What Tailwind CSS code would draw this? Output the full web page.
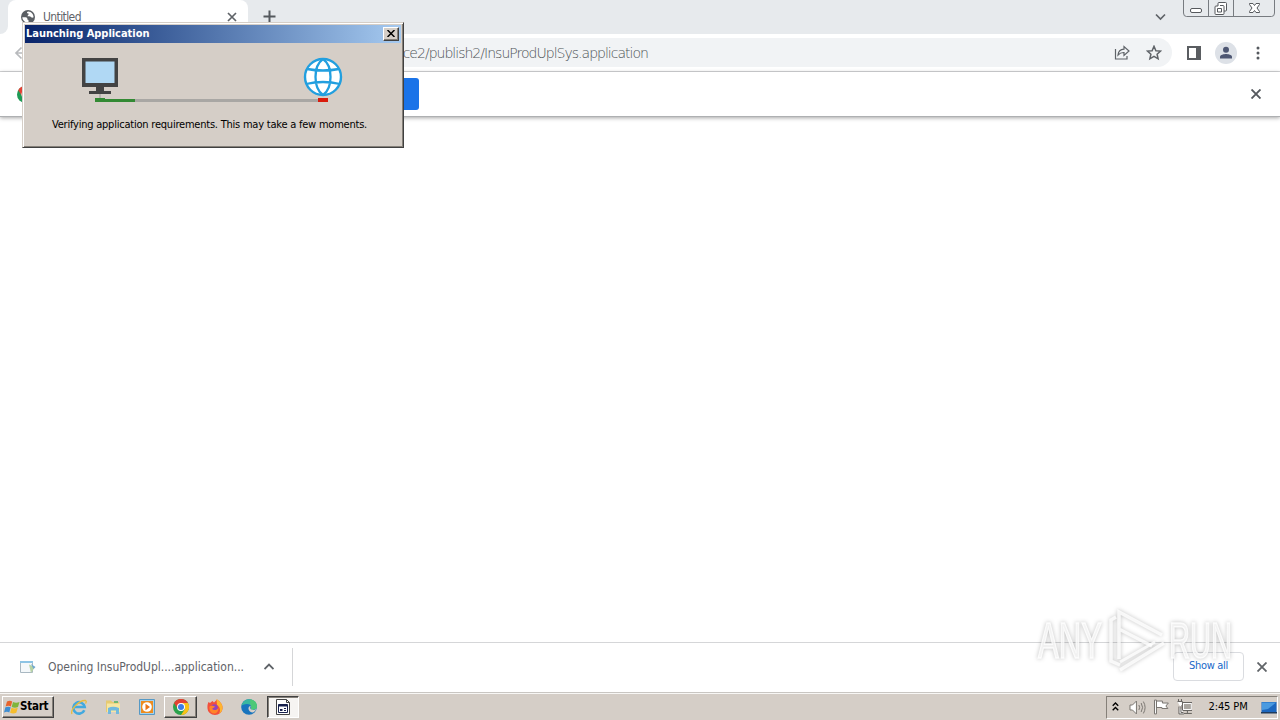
<!DOCTYPE html>
<html lang="en">
<head>
<meta charset="utf-8">
<title>Untitled</title>
<script src="https://cdn.jsdelivr.net/npm/@tailwindcss/browser@4"></script>
</head>
<body class="w-[1280px] h-[720px] overflow-hidden bg-white font-['DejaVu_Sans_Condensed','DejaVu_Sans',sans-serif] [font-stretch:condensed]">
<div class="relative flex h-[720px] w-[1280px] flex-col overflow-hidden">

  <!-- Tab strip -->
  <header class="flex h-[34px] shrink-0 items-start bg-[#e7eaed]">
    <div class="h-[34px] w-2 bg-white"><div class="h-full w-full rounded-br-lg bg-[#e7eaed]"></div></div>
    <div class="flex h-[34px] w-[240px] items-center rounded-t-lg bg-white pl-[13px] pr-[11px]">
      <svg class="size-[14px] shrink-0" viewBox="0 0 14 14"><circle cx="7" cy="7" r="7" fill="#5b5f64"/><path d="M1.3 7.2h3.2c1.8 0 2 1 1.8 2.2 1.2 0 1.4.7 1.2 2.8-3.4.6-6-1.800-6.200-5zM6 2c-.2 1.500.8 1.400 1.600 1.600.3 1.700-1.200 1.500-1 2.600 1.500.5 2.400-.2 3.400.9.9.9 1.500.6 2.600.1C12.500 4 10 1.500 7.500 1.400z" fill="#fff"/></svg>
      <span class="ml-2 text-[12px] leading-[34px] tracking-[-0.6px] text-[#5f6368]">Untitled</span>
      <svg class="ml-auto size-[10px]" viewBox="0 0 10 10" stroke="#5f6368" stroke-width="1.700"><path d="M1 1l8 8M9 1L1 9"/></svg>
    </div>
    <svg class="ml-[15px] mt-[10px] size-[13px]" viewBox="0 0 13 13" stroke="#55595e" stroke-width="2"><path d="M6.500.5v12M.5 6.500h12"/></svg>
    <svg class="ml-auto mr-[16px] mt-[13px] h-[8px] w-[11px]" viewBox="0 0 11 8" fill="none" stroke="#5f6368" stroke-width="1.700"><path d="M1 1.500l4.500 4.500L10 1.500"/></svg>
    <svg class="mr-1 h-[18px] w-[94px]" viewBox="0 0 94 18" fill="none" stroke="#777b80"><path d="M1.500 0v13q0 3.500 3 3.500h85q3 0 3-3.500V0M26.500 0v16M51.500 0v16"/><g fill="#fff" stroke="#56595d"><rect x="8.500" y="8.500" width="11" height="4" rx="1.500"/><path d="M36 3.500q0-1 1-1h6.500q1 0 1 1V10q0 1-1 1H42v2.500q0 1-1 1h-7q-1 0-1-1V7q0-1 1-1h2zM35.500 8.500h4v3.500h-4zM38 5.500h3q1 0 1 1V11" /><path d="M67.500 3.500h3.500l1.500 2 1.500-2h3.500v1L75 8l2.500 3.500v1H74l-1.500-2-1.500 2h-3.500v-1L70 8l-2.500-3.500z"/></g></svg>
  </header>

  <!-- Toolbar -->
  <div class="flex h-[38px] shrink-0 items-center border-b border-[#d5d6d8] bg-white">
    <svg class="ml-[14px] size-[14px]" viewBox="0 0 14 14" fill="none" stroke="#b8babd" stroke-width="1.700"><path d="M14 7H2M7.500 1.500L2 7l5.500 5.500"/></svg>
    <div class="ml-20 flex h-[29px] w-[1064px] items-center rounded-full bg-[#f1f3f5] pr-[10px]">
      <span class="w-[540px] text-right font-['DejaVu_Sans_Light','DejaVu_Sans',sans-serif] text-[14px] font-extralight leading-[28px] tracking-[-0.98px] text-[#4f5357]">ce2/publish2/InsuProdUplSys.application</span>
      <svg class="ml-auto size-[16px]" viewBox="0 0 16 16" fill="none" stroke="#5f6368" stroke-width="1.200"><path d="M1.500 4v10h11.500V11"/><path d="M4 10Q4.500 4.500 10 4.200V1.500l5 4.500-5 4.500V7.500Q6.500 7.300 4 10z"/></svg>
      <svg class="ml-4 size-[16px]" viewBox="0 0 16 16" fill="none" stroke="#5f6368" stroke-width="1.500"><path d="M8 1.300l1.900 4.400 4.700.4-3.500 3.100 1 4.600L8 11.300l-4.100 2.500 1-4.600-3.500-3.100 4.700-.4z"/></svg>
    </div>
    <svg class="ml-[15px] h-[14px] w-[14px]" viewBox="0 0 14 14"><path d="M0 0h14v14H0zM2 2v10h7V2z" fill="#5a5d61" fill-rule="evenodd"/></svg>
    <svg class="ml-[14px] size-[22px]" viewBox="0 0 22 22"><circle cx="11" cy="11" r="11" fill="#dde1e7"/><circle cx="11" cy="7.800" r="3" fill="#4e5773"/><path d="M5 16.500v-1.700c0-2 4-2.800 6-2.800s6 .8 6 2.800v1.700z" fill="#4e5773"/></svg>
    <svg class="ml-[19px] h-[14px] w-[4px]" viewBox="0 0 4 14" fill="#55595e"><circle cx="2" cy="2" r="1.500"/><circle cx="2" cy="7" r="1.500"/><circle cx="2" cy="12" r="1.500"/></svg>
  </div>

  <!-- Info bar -->
  <div class="relative flex h-[45px] shrink-0 items-center border-b border-[#aeb0b2] bg-white shadow-[0_1px_4px_rgba(0,0,0,0.35)]">
    <svg class="ml-[17px] size-[17px]" viewBox="0 0 17 17"><circle cx="8.500" cy="8.500" r="8.500" fill="#1e9b56"/><path d="M1.200 4.200A8.500 8.500 0 0 1 16 4.500H8.500L5 10z" fill="#e44135"/><path d="M8.500 4.500H16A8.500 8.500 0 0 1 8.500 17l4-7z" fill="#fbc116"/><circle cx="8.500" cy="8.500" r="4" fill="#fff"/><circle cx="8.500" cy="8.500" r="3" fill="#4285f4"/></svg>
    <div class="ml-[265px] h-[32px] w-[120px] rounded-[3px] bg-[#1a73e8]"></div>
    <svg class="ml-auto mr-[19px] size-[10px]" viewBox="0 0 10 10" stroke="#55595e" stroke-width="1.900"><path d="M.5.5l9 9M9.500.5l-9 9"/></svg>
  </div>

  <main class="grow bg-white"></main>

  <!-- Downloads -->
  <div class="flex h-[50px] shrink-0 items-center border-t border-[#d5d6d8] bg-white pb-[2px]">
    <div class="flex h-[38px] w-[293px] items-center border-r border-[#d5d6d8] pl-5">
      <svg class="h-[14px] w-[16px]" viewBox="0 0 16 14"><path d="M.5 1.500h12v11H.5z" fill="#f4f8fa" stroke="#a9b8c2"/><path d="M0 1h13v2H0z" fill="#8cc4e5"/><path d="M9 4.500l6 2.500-4 6z" fill="#b8d3a5"/><path d="M11 4l4.500 3-2 2z" fill="#72a9d0"/></svg>
      <span class="ml-3 w-[200px] whitespace-nowrap text-[12px] font-extralight tracking-[-0.02px] text-[#5f6368]">Opening InsuProdUpl....application...</span>
      <svg class="ml-[16px] h-[7px] w-[10px]" viewBox="0 0 10 7" fill="none" stroke="#5f6368" stroke-width="1.800"><path d="M.5 6L5 1.500 9.500 6"/></svg>
    </div>
    <div class="ml-auto flex h-[29px] w-[71px] items-center justify-center whitespace-nowrap rounded border border-[#dadce0] text-[11px] tracking-[-0.3px] text-[#1967c8]">Show all</div>
    <svg class="ml-[13px] mr-[13px] size-[10px]" viewBox="0 0 10 10" stroke="#606468" stroke-width="1.800"><path d="M.5.5l9 9M9.500.5l-9 9"/></svg>
  </div>

  <!-- Taskbar -->
  <footer class="flex h-[28px] shrink-0 items-start border-t border-[#c9c6c2] bg-[#d5cec7] shadow-[inset_0_1px_0_#f8f7f5]">
    <div class="ml-[2px] mt-[3px] flex h-[22px] w-[52px] items-center border border-b-[#404040] border-l-white border-r-[#404040] border-t-white pl-px shadow-[inset_-1px_-1px_0_#858079]">
      <svg class="h-[15px] w-[16px] shrink-0" viewBox="0 0 16 15"><path d="M3 1.500Q6-.2 8.200 1.500L6.900 6.500Q4.500 5 1.600 6.500z" fill="#e8642c"/><path d="M9 2q3 1.500 6.500 0L14 7q-3 1.500-6.300 0z" fill="#7fb53a"/><path d="M1.400 7.300Q4.300 6 6.700 7.300L5.300 12.500Q3 11 0 12.500z" fill="#3f8ed2"/><path d="M7.500 7.800q3 1.400 6.300 0l-1.500 5q-3 1.500-6.200 0z" fill="#f5bd2d"/></svg>
      <span class="text-[11.5px] font-bold tracking-[-0.25px] text-black">Start</span>
    </div>
    <div class="ml-[17px] mt-[6px] flex h-4 items-center gap-[18px]">
      <svg class="size-[16px]" viewBox="0 0 16 16" fill="none"><path d="M13.300 11.200A5.700 5.700 0 1 1 13.700 8H4" stroke="#42a9df" stroke-width="2.600"/><path d="M1 15C-1 11 8 1 14.500 1.500c1.200.5.800 2 0 3" stroke="#e8bc3e" stroke-width="1.300"/></svg>
      <svg class="size-[16px]" viewBox="0 0 16 16"><path d="M1 3V1.500h5L7.500 3H14v10H1z" fill="#e6ca72"/><path d="M2 4.500h13V13H2z" fill="#f7e6a1"/><path d="M3 9q5-2.500 11 0v6h-3v-3.500H6V15H3z" fill="#72b9dd"/><path d="M9 2h4v2H9z" fill="#70b774"/></svg>
      <svg class="size-[16px]" viewBox="0 0 16 16"><path d="M.5.5h15v15H.5z" fill="#a5d2ed" stroke="#5699c5"/><path d="M2 2h12v12H2z" fill="#ed8c1f"/><circle cx="8" cy="8" r="4.800" fill="#fff"/><path d="M6.500 4.800L11 8l-4.500 3.200z" fill="#ea7518"/></svg>
    </div>
    <div class="ml-[9px] mt-[3px] flex h-[22px] w-[33px] items-center justify-center border border-b-[#404040] border-l-white border-r-[#404040] border-t-white shadow-[inset_-1px_-1px_0_#858079]">
      <svg class="size-[16px]" viewBox="0 0 16 16"><circle cx="8" cy="8" r="8" fill="#2ba24c"/><path d="M1 4a8 8 0 0 1 14 0H8L5 10z" fill="#e34133"/><path d="M8 4h7A8 8 0 0 1 8 16l4-6z" fill="#fbc116"/><circle cx="8" cy="8" r="4" fill="#fff"/><circle cx="8" cy="8" r="3" fill="#3c7de6"/></svg>
    </div>
    <div class="ml-[10px] mt-[6px] flex h-4 items-center gap-[18px]">
      <svg class="size-[16px]" viewBox="0 0 16 16"><path d="M1.500 3l1.500 1L5.500 2 7 3.500l3-3C14 3 16 6 15.500 9.500a7.500 6.500 0 0 1-15 0C.3 7 .5 5 1.500 3z" fill="#f2503c"/><path d="M9.500 0c4 2.500 6.500 6 6 9.500-.3 2.500-1.800 4.500-3.500 5.500 2-4 1-7-2-9z" fill="#ffb52f"/><circle cx="7.500" cy="8.500" r="3.300" fill="#9245ba"/><path d="M2.500 7.500c2-1.500 4 0 5.500 0-.5 1.500-2.500 1-2.800 2.500 1.800 2 5 1 6.300-1 0 3.500-2 5.500-4.500 5.500-3 0-5-3-4.500-7z" fill="#ff8427"/></svg>
      <svg class="size-[16px]" viewBox="0 0 16 16"><circle cx="8" cy="8" r="7.800" fill="#1874bd"/><path d="M.3 7C2 1 6 0 8.500.2c5 .4 8 4.500 7.300 8-.8 3-5 3-6 1.500C11 7 9 5 6 5 3 5 1 6 .3 7z" fill="#39b7a0"/><path d="M9 .2c5 .4 7.500 4.500 6.800 8-.8 3-5 3-6 1.500 1-2 .5-3-.5-4z" fill="#4dc877"/><path d="M9.800 7.500c-1 1-.7 2.500.7 3 1.500.7 3.500.5 4.700-.5-.5 1.500-1.500 2.500-2.500 3.300-3 .7-5.500-2-5.200-4 .3-1.700 1.200-2.300 2.300-1.800z" fill="#d5cec7"/></svg>
    </div>
    <div class="ml-[10px] mt-[3px] flex h-[22px] w-[32px] items-center justify-center border border-b-white border-l-[#404040] border-r-white border-t-[#404040] bg-[#f6f4f2] shadow-[inset_1px_1px_0_#858079]">
      <svg class="h-[16px] w-[14px]" viewBox="0 0 14 16"><path d="M.5.500h10l3 3v12H.5z" fill="#fff" stroke="#444"/><path d="M10.500.5v3h3" fill="none" stroke="#444"/><path d="M2.500 5.500h9v8h-9z" fill="#fff" stroke="#17204d"/><path d="M2.500 5.500h9v2h-9z" fill="#17204d"/><path d="M4 10h2.500v2H4zM8 9h2v1H8zM8 11h2v1H8z" fill="#17204d"/></svg>
    </div>
    <div class="ml-auto mr-[2px] mt-[3px] flex h-[23px] w-[172px] items-center border border-b-white border-l-[#858079] border-r-white border-t-[#858079]">
      <svg class="-mt-[3px] ml-[5px] h-[9px] w-[7px]" viewBox="0 0 7 9" fill="none" stroke="#000" stroke-width="1.400"><path d="M.7 3.700l2.800-2.700 2.800 2.700M.7 8.200l2.800-2.700 2.800 2.700"/></svg>
      <svg class="ml-[10px] h-[15px] w-[17px]" viewBox="0 0 17 15" fill="none" stroke="#7a7671"><path d="M1 5h2.500L7.500 1v13L3.500 10H1z" fill="#fff"/><path d="M10 5q1.500 2.500 0 5M12.300 3q2.800 4.500 0 9M14.500 1.500q3.500 6 0 12"/></svg>
      <svg class="-mt-px ml-[7px] h-[16px] w-[17px]" viewBox="0 0 17 16" fill="#fff" stroke="#77736e"><path d="M1.500 1h2v14h-2zM3.500 2h6v2h6L13 7l2 2.500H9v-1H3.500z"/></svg>
      <svg class="-mt-px ml-[7px] h-[16px] w-[16px]" viewBox="0 0 16 16" fill="#fff" stroke="#625f5b"><path d="M5.500 3.500h10v8h-10z"/><path d="M7 5h7v5H7z" fill="#aaa6a0" stroke="none"/><path d="M7 14.500h8M10.500 12v2"/><path d="M.5 2.500h5V6L4 7.500v6h2.500M1.500 0v2M4.500 0v2M2 7.500v7.500h5" /></svg>
      <span class="ml-4 w-[49px] whitespace-nowrap text-[11px] tracking-[-0.1px] text-black">2:45 PM</span>
      <svg class="ml-[4px] h-[14px] w-[16px] shrink-0" viewBox="0 0 16 14"><path d="M.5 1h15v10H.5z" fill="#1c67bf"/><path d="M1 1.500h14L7 8l-6 1z" fill="#4a9ae0"/><path d="M0 11h16v1.500H0z" fill="#203c5d"/></svg>
    </div>
  </footer>

  <!-- Watermark overlay -->
  <svg class="absolute left-[1030px] top-[600px] h-[84px] w-[220px] drop-shadow-[0_0_2px_rgba(0,0,0,0.3)]" viewBox="0 0 220 84" fill="none" stroke="#fff" stroke-opacity=".8">
    <g font-family="Liberation Sans Narrow, Liberation Sans" font-size="50" fill="#fff" fill-opacity=".7" stroke-width="1.500"><text x="8" y="58" textLength="64" lengthAdjust="spacingAndGlyphs">ANY</text><text x="139" y="58" textLength="63" lengthAdjust="spacingAndGlyphs">RUN</text></g>
    <path d="M89 59V12L132 35M86 17L81 20V61L90 65M89 59V29L122 46M90 70L134 43" stroke-width="3.500"/><path d="M90 62L125 42" stroke-width="3"/>
  </svg>

  <!-- Launch dialog -->
  <section class="absolute left-[22px] top-[22px] flex h-[126px] w-[382px] flex-col border border-b-[#404040] border-l-[#d5cec7] border-r-[#404040] border-t-[#d5cec7] bg-[#d5cec7] p-[2px] shadow-[inset_1px_1px_0_#fff,inset_-1px_-1px_0_#858079]">
    <div class="flex h-[18px] shrink-0 items-center bg-linear-to-r from-[#0a246a] to-[#a6caf0] pl-px pr-[2px]">
      <span class="whitespace-nowrap text-[11px] font-bold tracking-[-0.03px] text-white">Launching Application</span>
      <div class="ml-auto flex h-[14px] w-[16px] items-center justify-center border border-b-[#404040] border-l-white border-r-[#404040] border-t-white bg-[#d5cec7] shadow-[inset_-1px_-1px_0_#858079]">
        <svg class="-mt-px h-[7px] w-[8px]" viewBox="0 0 8 7" stroke="#000" stroke-width="1.500"><path d="M.5 0l7 7M7.500 0l-7 7"/></svg>
      </div>
    </div>
    <svg class="ml-[55px] mt-[12px] h-[50px] w-[266px] shrink-0" viewBox="80 55 266 50">
      <path d="M82 58h36v29H82z" fill="#434343"/><path d="M85.500 61.500h29v21.500h-29z" fill="#b0d8f4"/><path d="M96 87h8v4h7v3H89v-3h7z" fill="#434343"/><path d="M99.500 94h1v5h-1z" fill="#999"/>
      <path d="M100 99h223v3H100z" fill="#a9a7a4"/><path d="M95 98h10v1h30v3H95z" fill="#338a34"/><path d="M318 98h10v4h-10z" fill="#d91b0c"/>
      <circle cx="323" cy="77" r="18" fill="#fff" stroke="#229fdf" stroke-width="2.400"/>
      <g fill="none" stroke="#229fdf" stroke-width="2.300"><path d="M323 59C313 66 313 88 323 95M323 59C333 66 333 88 323 95M307 69q16 3 32 0M306 84q17-4 34 0"/></g>
    </svg>
    <span class="ml-[27px] mt-[13px] whitespace-nowrap text-[11px] leading-[14px] tracking-[-0.22px] text-black">Verifying application requirements. This may take a few moments.</span>
  </section>
</div>
</body>
</html>
